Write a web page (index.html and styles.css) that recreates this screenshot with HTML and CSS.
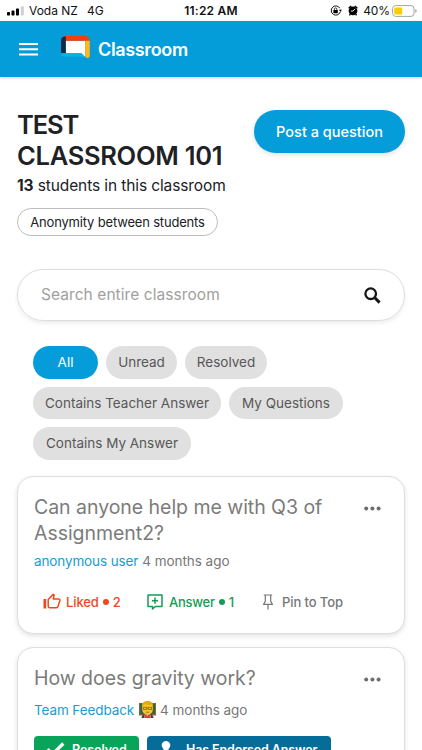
FILE: index.html
```html
<!DOCTYPE html>
<html lang="en">
<head>
<meta charset="utf-8">
<meta name="viewport" content="width=device-width, initial-scale=1">
<title>Classroom</title>
<link rel="stylesheet" href="styles.css">
</head>
<body>
<div class="status">
  <div class="status-left">
    <svg width="18" height="10" viewBox="0 0 18 10"><rect x="0" y="6" width="3" height="3.5" rx=".7"/><rect x="4.5" y="4.4" width="3" height="5.1" rx=".7"/><rect x="9" y="2.4" width="3" height="7.1" rx=".7"/><rect x="13.8" y=".2" width="3" height="9.3" rx=".7" fill="#d0d0d0"/></svg>
    <span class="carrier">Voda NZ</span><span class="network">4G</span>
  </div>
  <span class="clock">11:22 AM</span>
  <div class="status-right">
    <svg width="12" height="12" viewBox="0 0 12 12"><path d="M9.8 3.2A4.6 4.6 0 1 0 10.2 7" fill="none" stroke="#111" stroke-width="1"/><path d="M8.9 4.7h3L10.4 7z"/><rect x="3.4" y="5" width="4.4" height="3.3" rx=".5"/><path d="M4.4 5.2V4.1a1.2 1.2 0 0 1 2.4 0v1.1" fill="none" stroke="#111" stroke-width=".8"/></svg>
    <svg class="alarm" width="10" height="11" viewBox="0 0 10 11"><circle cx="5" cy="5.8" r="4.4"/><path d="M.2 2.7 2.7.4l1 1L1 3.8zM9.8 2.7 7.3.4l-1 1L9 3.8zM1.7 8.7l1.2 1-1 1.1-1-.8zM8.3 8.7l-1.2 1 1 1.1 1-.8z"/><path d="M7.1 3.8 5 6.1H2.9" fill="none" stroke="#fff" stroke-width=".9"/></svg>
    <span class="percent">40%</span>
    <svg width="25" height="12" viewBox="0 0 25 12"><rect x=".6" y=".6" width="21.4" height="10.8" rx="3" fill="#fff" stroke="#a5a5a5"/><rect x="2.2" y="2.4" width="8" height="7.2" rx="1.3" fill="#fc0"/><path d="M23.3 4v4c1.8-.5 1.8-3.500 0-4z" fill="#a5a5a5"/></svg>
  </div>
</div>
<header class="header">
  <svg class="menu" width="19" height="14" viewBox="0 0 19 14"><path d="M0 2h19M0 7.200h19M0 12.400h19" stroke="#fff" stroke-width="2"/></svg>
  <svg class="logo" width="29" height="22" viewBox="0 0 29 22"><path d="M4.800 4.800h19.400V21l-3.800-3.800H4.800z" fill="#fff"/><path d="M4 0h20.500a4.500 4.500 0 0 1 4.300 4.800H4.500L2 .8Q3 0 4 0z" fill="#f93c0c"/><path d="M4.800 .2v17H0V4.500Q0 .5 4.800.2z" fill="#102a4c"/><path d="M24.200 4.800h4.600v14.700Q28.800 22 26.500 22 24.500 22 24.200 20z" fill="#ffb71b"/><path d="M0 17.200h20.200l4 4q-1 .3-2-.5H4q-4 0-4-3.500z" fill="#06b3e6"/></svg>
  <span class="brand">Classroom</span>
</header>
<main class="page">
  <section class="intro">
    <div class="intro-text">
      <h1><span class="title-a">TEST</span><br><span class="title-b">CLASSROOM 101</span></h1>
      <p class="students"><b>13</b> students in this classroom</p>
      <span class="tag">Anonymity between students</span>
    </div>
    <button class="post">Post a question</button>
  </section>
  <div class="search">
    <span>Search entire classroom</span>
    <svg width="17" height="17" viewBox="0 0 17 17" fill="none" stroke="#161616"><circle cx="6.700" cy="6.700" r="5.300" stroke-width="2.300"/><path d="m10.800 10.800 4.800 4.800" stroke-width="3"/></svg>
  </div>
  <div class="filters">
    <span class="chip active w-all">All</span><span class="chip w-unread">Unread</span><span class="chip w-resolved">Resolved</span><span class="chip w-teacher">Contains Teacher Answer</span><span class="chip w-mine">My Questions</span><span class="chip w-answer">Contains My Answer</span>
  </div>
  <article class="card">
    <div class="card-head">
      <h2>Can anyone help me with Q3 of<br><span class="line-two">Assignment2?</span></h2>
      <svg class="dots" width="17" height="5" viewBox="0 0 17 5"><circle cx="2.200" cy="2.500" r="2"/><circle cx="8.400" cy="2.500" r="2"/><circle cx="14.600" cy="2.500" r="2"/></svg>
    </div>
    <p class="meta"><a class="anon">anonymous user</a> <span class="ago">4 months ago</span></p>
    <div class="actions">
      <span class="action like"><svg width="18" height="17" viewBox="0 0 18 17"><path d="M.5 6h2.700v9.500H.5z" fill="currentColor"/><path d="M5.200 6.600 10.200 1.200l.9.900-.8 3.900h5.400q1.500 0 1.200 1.500l-1.900 6q-.4 1.200-1.600 1.200H6.600q-1.400 0-1.400-1.400z" fill="none" stroke="currentColor" stroke-width="1.500" stroke-linejoin="round"/></svg><span>Liked</span><i></i><span>2</span></span>
      <span class="action answer"><svg width="16" height="16" viewBox="0 0 16 16" fill="none" stroke="currentColor" stroke-width="1.500"><path d="M1 1h14v11.500H8.300L5.500 15v-2.500H1z" stroke-linejoin="round"/><path d="M8 3.600v6.200M4.900 6.700h6.200"/></svg><span>Answer</span><i></i><span>1</span></span>
      <span class="action pin"><svg width="10" height="16" viewBox="0 0 10 16" fill="none" stroke="currentColor" stroke-width="1.200"><path d="M.8 1h8.400M2.300 1v6.300L.7 10.300h8.600L7.700 7.300V1M5 10.300V15.500"/></svg><span>Pin to Top</span></span>
    </div>
  </article>
  <article class="card second">
    <div class="card-head">
      <h2 class="gravity">How does gravity work?</h2>
      <svg class="dots" width="17" height="5" viewBox="0 0 17 5"><circle cx="2.200" cy="2.500" r="2"/><circle cx="8.400" cy="2.500" r="2"/><circle cx="14.600" cy="2.500" r="2"/></svg>
    </div>
    <p class="meta"><a class="team">Team Feedback</a><svg class="teacher" width="17" height="17" viewBox="0 0 17 17"><path d="M0 2h17v12.500H0z" fill="#8a6338"/><path d="M1 3h15v10H1z" fill="#34664a"/><path d="M2.500 17q0-4.300 6-4.300t6 4.300z" fill="#4d3f3a"/><path d="M5.800 13.500h5.400L12 17H5z" fill="#f4e6e0"/><path d="m6 13.200 2.500 1.500 2.500-1.500.8 3.800H5.200z" fill="#e23e35"/><path d="M3.200 5.500Q3.200 0 8.500 0t5.300 5.500v3.200q-.5 4.600-5.300 5-4.800-.4-5.300-5z" fill="#fbc52c"/><path d="M3 6.500Q2.300 0 8.500 0T14 6.500L12.500 3.600q-4 .8-6-.6L4.500 4.200z" fill="#e3a81c"/><path d="M4.500 6.300h3.200v2.200H4.500zM9.300 6.300h3.200v2.200H9.300zM7.700 7h1.600M6.800 11.200h3.400" fill="none" stroke="#785114" stroke-width=".7"/></svg><span class="ago">4 months ago</span></p>
    <div class="badges">
      <span class="badge resolved"><svg width="19" height="14" viewBox="0 0 19 14"><path d="m1.500 7.200 5 5L17.300 1.500" fill="none" stroke="#fff" stroke-width="3.300"/></svg><span>Resolved</span></span>
      <span class="badge endorsed"><svg width="14" height="17" viewBox="0 0 14 17" fill="#fff"><path d="M7 0a4.300 4.300 0 0 1 4 5.800L8.800 9.500H12q2 0 2 2V14H0v-2.500q0-2 2-2h3.200L3 5.800A4.300 4.300 0 0 1 7 0zM1 15h12v2H1z"/></svg><span>Has Endorsed Answer</span></span>
    </div>
  </article>
</main>
</body>
</html>
```
FILE: styles.css
```css
* { box-sizing: border-box; }
html { overflow: hidden; }
body { margin: 0; height: 750px; overflow: hidden; background: #fff; color: #202124; font-family: Inter, "Liberation Sans", sans-serif; }
svg { display: block; flex: none; }
p, h1, h2 { margin: 0; }
span, a { white-space: nowrap; }
.status { height: 21px; display: grid; grid-template-columns: 1fr auto 1fr; align-items: center; padding: 0 5px 0 7px; color: #111; font-size: 12px; line-height: 20px; }
.status-left, .status-right { display: flex; align-items: center; }
.status-right { justify-content: flex-end; }
.carrier { margin-left: 4px; }
.network { margin-left: 9px; }
.clock { font-weight: 600; letter-spacing: .2px; margin-right: 2px; }
.alarm { margin: 0 5px 0 6px; }
.percent { margin-right: 2px; letter-spacing: -.1px; }
.header { height: 56px; background: #059dd9; display: flex; align-items: center; padding-left: 19px; color: #fff; box-shadow: 0 1px 3px rgba(0,0,0,.18); }
.logo { margin: -4px 0 0 23px; }
.brand { margin-left: 8px; font-size: 18px; font-weight: 600; letter-spacing: -.35px; }
.page { height: 673px; overflow: hidden; padding: 33px 17px 0; }
.intro { display: flex; justify-content: space-between; align-items: flex-start; height: 159px; }
h1 { font-size: 25.500px; font-weight: 600; line-height: 30.500px; }
.title-a { letter-spacing: -1.100px; }
.title-b { letter-spacing: -.28px; }
.intro-text { flex: none; width: 210px; }
.students { margin-top: 4px; font-size: 15.500px; line-height: 22px; letter-spacing: -.11px; white-space: nowrap; }
.tag { margin-top: 11px; width: 201px; height: 28px; padding-bottom: 1px; border: 1px solid #bdbdbd; border-radius: 15px; display: flex; align-items: center; justify-content: center; font-size: 13px; letter-spacing: -.18px; }
.post { width: 151px; height: 43px; padding: 0; border: 0; border-radius: 22px; background: #059dd9; color: #fff; font: 500 14.500px Inter, sans-serif; box-shadow: 0 2px 5px rgba(0,0,0,.12); }
.search { height: 52px; border: 1px solid #dedede; border-radius: 26px; display: flex; align-items: center; justify-content: space-between; padding: 0 23px; color: #a0a0a0; font-size: 15.500px; letter-spacing: .07px; box-shadow: 0 2px 4px rgba(0,0,0,.08); }
.search span { padding-bottom: 2px; }
.filters { margin-top: 25px; padding-left: 16px; display: flex; flex-wrap: wrap; gap: 8px; }
.chip { height: 32.600px; border-radius: 17px; background: #e0e0e0; color: #575757; font-size: 13.500px; display: flex; align-items: center; justify-content: center; }
.chip.active { background: #059dd9; color: #fff; }
.w-all { width: 65px; } .w-unread { width: 71px; } .w-resolved { width: 82px; margin-right: 80px; }
.w-teacher { width: 188px; } .w-mine { width: 114px; } .w-answer { width: 158px; }
.card { margin-top: 16.200px; height: 158px; padding: 17px 16px 0; border: 1px solid #dedede; border-radius: 16px; background: #fff; box-shadow: 0 2px 5px rgba(0,0,0,.12); }
.card-head { display: flex; justify-content: space-between; }
h2 { font-size: 19.500px; line-height: 26px; font-weight: 400; letter-spacing: -.04px; color: #7b7b7b; white-space: nowrap; }
.dots { margin: 12px 7px 0 0; fill: #6d6d6d; }
.meta { display: flex; align-items: center; gap: 4px; height: 20px; margin-top: 5px; font-size: 13.500px; letter-spacing: -.04px; color: #777; }
.meta a { color: #219bd3; }
.meta .anon { letter-spacing: -.12px; }
.meta .team { letter-spacing: -.1px; }
.teacher { margin-left: 1px; }
.actions { display: flex; margin: 22px 0 0 9px; height: 18px; align-items: center; font-size: 13px; font-weight: 500; color: #777; }
.action { display: flex; align-items: center; }
.action svg { margin-right: 5px; }
.action i { width: 6px; height: 6px; border-radius: 50%; background: currentColor; margin: 0 4px; }
.like { color: #f1471d; width: 104px; letter-spacing: -.1px; }
.answer { color: #159b53; width: 116px; letter-spacing: -.25px; }
.answer svg { margin-right: 6px; }
.pin { letter-spacing: -.1px; }
.pin svg { margin-right: 9px; }
.second { margin-top: 13px; padding-top: 17px; }
.second .meta { margin-top: 9px; gap: 4px; }
.badges { display: flex; gap: 8px; margin-top: 16px; }
.badge { height: 28px; padding-bottom: 1px; border-radius: 4px; color: #fff; display: flex; align-items: center; font-size: 12.500px; letter-spacing: -.12px; font-weight: 600; }
.resolved { width: 105px; background: #08a45a; padding-left: 12px; gap: 7px; }
.endorsed { width: 184px; background: #066c9a; padding-left: 12px; gap: 13px; }
```
